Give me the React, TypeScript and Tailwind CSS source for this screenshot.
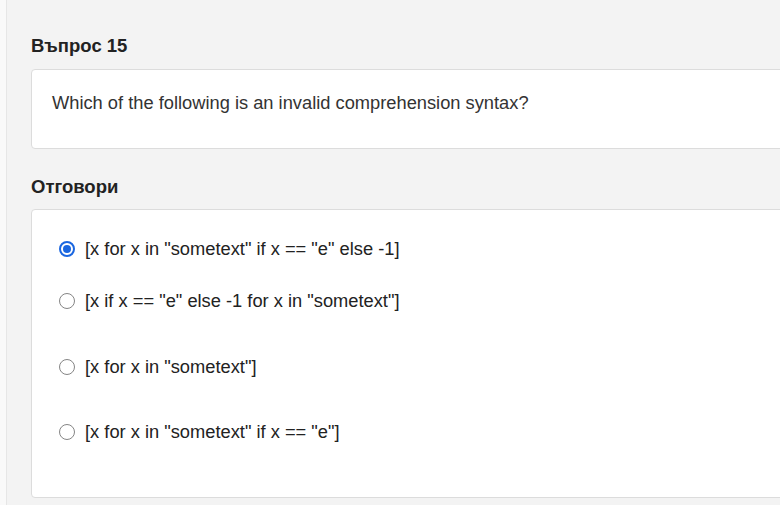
import React from "react";

const answers = [
  { text: '[x for x in "sometext" if x == "e" else -1]', checked: true, mt: "" },
  { text: '[x if x == "e" else -1 for x in "sometext"]', checked: false, mt: "mt-[26px]" },
  { text: '[x for x in "sometext"]', checked: false, mt: "mt-[40px]" },
  { text: '[x for x in "sometext" if x == "e"]', checked: false, mt: "mt-[39px]" },
];

function Radio({ checked }: { checked: boolean }) {
  if (checked) {
    return (
      <span className="flex items-center justify-center w-[16px] h-[16px] rounded-full border-[2px] border-[#1a66e0] bg-white shrink-0">
        <span className="w-[8px] h-[8px] rounded-full bg-[#1a66e0]" />
      </span>
    );
  }
  return <span className="w-[16px] h-[16px] rounded-full border-[1.5px] border-[#858585] bg-white shrink-0" />;
}

export default function App() {
  return (
    <div
      className="flex w-[780px] h-[505px] overflow-hidden bg-[#f3f3f3] text-[#222]"
      style={{ fontFamily: '"Liberation Sans", Arial, sans-serif' }}
    >
      <div className="w-[7px] shrink-0 bg-[#f9f9f9] border-r border-[#e6e6e6]" />
      <div className="pl-[24px] pt-[35px] shrink-0">
        <h2 className="text-[18.5px] font-bold leading-[22px] text-[#222]">Въпрос 15</h2>
        <div className="mt-[12px] w-[780px] h-[80px] bg-white border border-[#dcdcdc] rounded-[4px] pl-[20px] pt-[20px]">
          <p className="text-[18.3px] leading-[26px] text-[#333]">
            Which of the following is an invalid comprehension syntax?
          </p>
        </div>
        <h2 className="mt-[27px] text-[18.5px] font-bold leading-[22px] text-[#222]">Отговори</h2>
        <div className="mt-[11px] w-[780px] h-[289px] bg-white border border-[#dcdcdc] rounded-[4px] pl-[27px] pt-[26px]">
          {answers.map((a, i) => (
            <label key={i} className={`flex items-center gap-[10px] ${a.mt}`}>
              <Radio checked={a.checked} />
              <span className="text-[18.3px] leading-[26px] text-[#222]">{a.text}</span>
            </label>
          ))}
        </div>
      </div>
    </div>
  );
}
